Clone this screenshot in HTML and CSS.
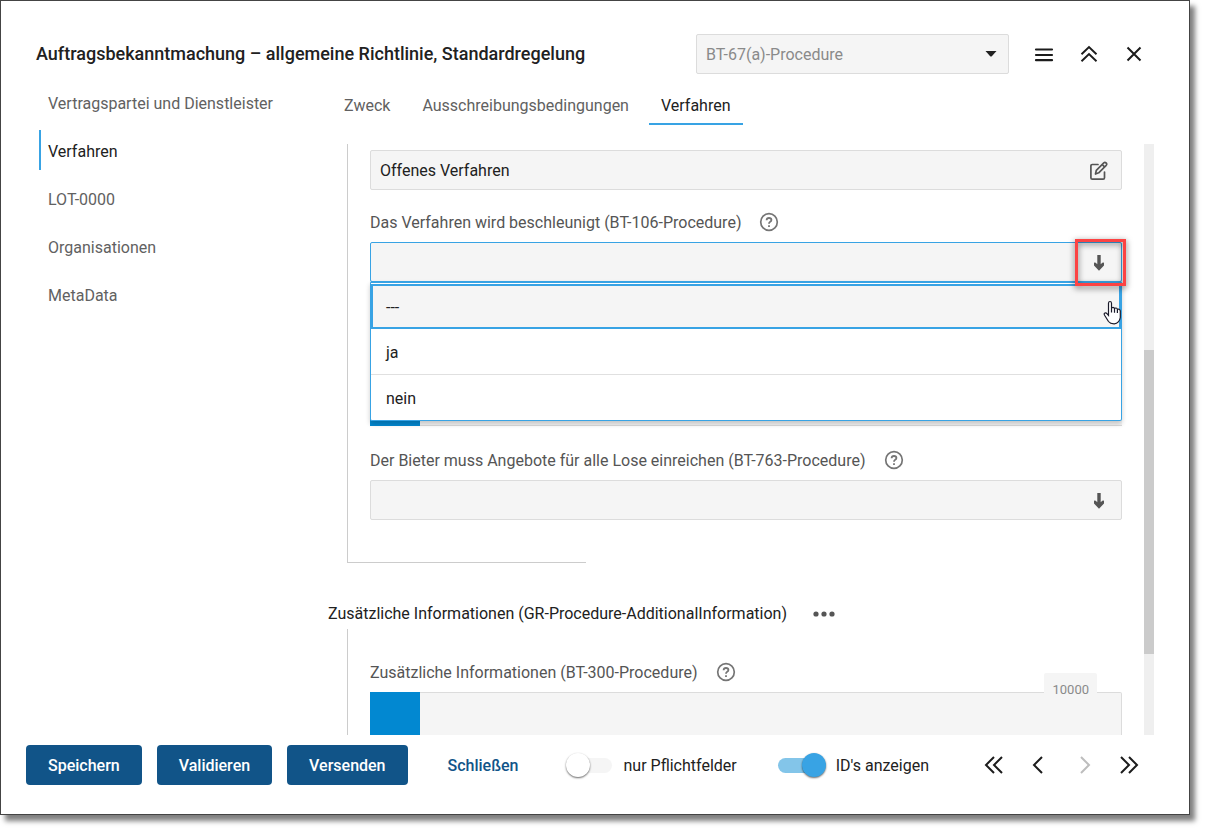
FILE: index.html
```html
<!DOCTYPE html>
<html lang="de">
<head>
<meta charset="utf-8">
<title>Auftragsbekanntmachung</title>
<link rel="stylesheet" href="styles.css">
</head>
<body>
<div class="dialog">
  <header class="header">
    <h1 class="title">Auftragsbekanntmachung – allgemeine Richtlinie, Standardregelung</h1>
    <div class="jump">
      <select class="jump-select" aria-label="Feld">
        <option>BT-67(a)-Procedure</option>
      </select>
      <svg class="jump-caret" width="12" height="6" viewBox="0 0 12 6"><path d="M0.500 0h11L6.800 5.200q-.8.8-1.600 0z" fill="#212121"/></svg>
    </div>
    <div class="header-actions">
      <button class="icon-button" aria-label="Menü"><svg width="20" height="20" viewBox="0 0 20 20" fill="none" stroke="#1c1c1c" stroke-width="2.200" stroke-linecap="round"><path d="M2 5.500h16M2 11h16M2 16.200h16"/></svg></button>
      <button class="icon-button" aria-label="Einklappen"><svg width="20" height="20" viewBox="0 0 20 20" fill="none" stroke="#1c1c1c" stroke-width="1.900"><path d="M2.500 10.200L10 3l7.500 7.200M2.500 17.200L10 10l7.500 7.200"/></svg></button>
      <button class="icon-button" aria-label="Schließen"><svg width="20" height="20" viewBox="0 0 20 20" fill="none" stroke="#1c1c1c" stroke-width="2"><path d="M3.500 3.500l13 13M16.500 3.500l-13 13"/></svg></button>
    </div>
  </header>

  <div class="main">
    <nav class="sidebar">
      <a class="side-item" href="#">Vertragspartei und Dienstleister</a>
      <a class="side-item active" href="#">Verfahren</a>
      <a class="side-item" href="#">LOT-0000</a>
      <a class="side-item" href="#">Organisationen</a>
      <a class="side-item" href="#">MetaData</a>
    </nav>

    <section class="content">
      <nav class="tabs">
        <a class="tab" href="#">Zweck</a>
        <a class="tab" href="#">Ausschreibungsbedingungen</a>
        <a class="tab active" href="#">Verfahren</a>
      </nav>

      <div class="scroller">
        <div class="form">
          <div class="group group-closed">
            <div class="control">
              <input class="input" type="text" value="Offenes Verfahren" aria-label="Verfahrensart" readonly>
              <button class="control-button" aria-label="Bearbeiten"><svg width="20" height="20" viewBox="0 0 20 20" fill="none" stroke="#555" stroke-width="1.700" stroke-linecap="round" stroke-linejoin="round"><path d="M9 3.500H3.300Q1.900 3.500 1.900 4.900v11.900q0 1.400 1.400 1.400h10.800q1.400 0 1.400-1.400v-5.700"/><path d="M6.500 13l.8-3.600 7.500-7.500q1.100-.9 2.300.1t.1 2.300l-7.500 7.500zM13.300 3.600l2.200 2.200"/></svg></button>
            </div>

            <div class="label-row">
              <label for="bt106">Das Verfahren wird beschleunigt (BT-106-Procedure)</label>
              <button class="help" aria-label="Hilfe"><svg width="20" height="20" viewBox="0 0 20 20" fill="none" stroke="#757575" stroke-width="1.700"><circle cx="10" cy="10" r="8.300"/><path d="M7.600 8.200Q7.700 6 10 6t2.400 1.900q0 1.100-1.200 1.800T10 11.700M10 13.200v1.800" stroke-width="1.800"/></svg></button>
            </div>
            <div class="control open">
              <input class="input" id="bt106" type="text">
              <button class="control-button" aria-label="Auswahl öffnen"><svg width="20" height="20" viewBox="0 0 20 20" fill="#555"><path d="M8.300 2h3.400v9.300l1.600-1.500q.9-.8 1.700 0v2.600L10 17.700l-5-5.300V9.800q.8-.8 1.700 0l1.600 1.500z"/></svg></button>
              <div class="marker"></div>
              <div class="menu" role="listbox">
                <button class="option focused" role="option">---</button>
                <button class="option" role="option">ja</button>
                <button class="option" role="option">nein</button>
              </div>
              <svg class="pointer" width="20" height="26" viewBox="0 0 20 26"><path d="M5.500 15.500V3.200Q5.600 1.500 7 1.500t1.500 1.700V8.500Q8.700 7.300 10 7.300t1.500 1.500Q11.800 7.900 13 8t1.400 1.500Q15 8.800 16 9.200t1.300 1.700v6.600q-.4 2.700-2 4.300-1.600 1.900-4 2-4 .1-5.800-2.300L1.600 15.200Q.6 13.500 1.900 13q1.300-.4 2.300 1zM8.500 8.500v4M11.500 9v3.700M14.400 9.700v3.200" fill="#fff" stroke="#1a1a2a" stroke-width="1.200"/></svg>
            </div>

            <div class="covered"><span class="strip"></span></div>

            <div class="label-row">
              <label for="bt763">Der Bieter muss Angebote für alle Lose einreichen (BT-763-Procedure)</label>
              <button class="help" aria-label="Hilfe"><svg width="20" height="20" viewBox="0 0 20 20" fill="none" stroke="#757575" stroke-width="1.700"><circle cx="10" cy="10" r="8.300"/><path d="M7.600 8.200Q7.700 6 10 6t2.400 1.900q0 1.100-1.200 1.800T10 11.700M10 13.200v1.800" stroke-width="1.800"/></svg></button>
            </div>
            <div class="control">
              <input class="input" id="bt763" type="text">
              <button class="control-button" aria-label="Auswahl öffnen"><svg width="20" height="20" viewBox="0 0 20 20" fill="#555"><path d="M8.300 2h3.400v9.300l1.600-1.500q.9-.8 1.700 0v2.600L10 17.700l-5-5.300V9.800q.8-.8 1.700 0l1.600 1.500z"/></svg></button>
            </div>
          </div>

          <div class="group-heading">
            <h2>Zusätzliche Informationen (GR-Procedure-AdditionalInformation)</h2>
            <button class="more" aria-label="Mehr"><svg width="22" height="8" viewBox="0 0 22 8" fill="#555"><circle cx="3" cy="4" r="2.600"/><circle cx="11" cy="4" r="2.600"/><circle cx="19" cy="4" r="2.600"/></svg></button>
          </div>

          <div class="group group-extra">
            <div class="label-row">
              <label for="bt300">Zusätzliche Informationen (BT-300-Procedure)</label>
              <button class="help" aria-label="Hilfe"><svg width="20" height="20" viewBox="0 0 20 20" fill="none" stroke="#757575" stroke-width="1.700"><circle cx="10" cy="10" r="8.300"/><path d="M7.600 8.200Q7.700 6 10 6t2.400 1.900q0 1.100-1.200 1.800T10 11.700M10 13.200v1.800" stroke-width="1.800"/></svg></button>
            </div>
            <div class="area">
              <span class="strip"></span>
              <textarea class="textarea" id="bt300"></textarea>
              <span class="counter">10000</span>
            </div>
          </div>
        </div>
        <div class="track"><div class="thumb"></div></div>
      </div>
    </section>
  </div>

  <footer class="footer">
    <div class="buttons">
      <button class="primary">Speichern</button>
      <button class="primary">Validieren</button>
      <button class="primary">Versenden</button>
    </div>
    <button class="link-button">Schließen</button>
    <label class="toggle"><input class="switch" type="checkbox"><span class="toggle-text">nur Pflichtfelder</span></label>
    <label class="toggle toggle-ids"><input class="switch" type="checkbox" checked><span class="toggle-text">ID's anzeigen</span></label>
    <div class="pager">
      <button class="icon-button" aria-label="Erste"><svg width="20" height="20" viewBox="0 0 20 20" fill="none" stroke="#1c1c1c" stroke-width="2"><path d="M10 2l-8 8 8 8M18 2l-8 8 8 8"/></svg></button>
      <button class="icon-button" aria-label="Zurück"><svg width="20" height="20" viewBox="0 0 20 20" fill="none" stroke="#1c1c1c" stroke-width="2"><path d="M13 2l-8 8 8 8"/></svg></button>
      <button class="icon-button" aria-label="Weiter" disabled><svg width="20" height="20" viewBox="0 0 20 20" fill="none" stroke="#bdbdbd" stroke-width="2"><path d="M7 2l8 8-8 8"/></svg></button>
      <button class="icon-button" aria-label="Letzte"><svg width="20" height="20" viewBox="0 0 20 20" fill="none" stroke="#1c1c1c" stroke-width="2"><path d="M2 2l8 8-8 8M10 2l8 8-8 8"/></svg></button>
    </div>
  </footer>
</div>
</body>
</html>
```
FILE: styles.css
```css
* {
  box-sizing: border-box;
}

body {
  margin: 0;
  height: 100vh;
  padding: 0 15px 15px 0;
  overflow: hidden;
  background: #fff;
  color: #212121;
  font: 16px/20px Roboto, "Liberation Sans", sans-serif;
}

button,
input,
select,
textarea {
  margin: 0;
  padding: 0;
  border: 0;
  background: none;
  color: inherit;
  font: inherit;
}

svg {
  display: block;
}

a {
  color: inherit;
  text-decoration: none;
}

.dialog {
  display: flex;
  flex-direction: column;
  height: 100%;
  border: 1px solid #444;
  background: #fff;
  box-shadow: 5px 6px 5px rgba(0, 0, 0, 0.5);
}

/* Header */

.header {
  display: flex;
  align-items: center;
  padding: 33px 43px 0 35px;
}

.title {
  flex: 1;
  margin: 0;
  font-size: 18px;
  font-weight: 500;
  line-height: 24px;
}

.jump {
  position: relative;
  width: 313px;
}

.jump-select {
  display: block;
  width: 100%;
  height: 40px;
  padding: 2px 9px 0;
  border: 1px solid #dcdcdc;
  border-radius: 2px;
  background: #f5f5f5;
  color: #8a8a8a;
  appearance: none;
}

.jump-caret {
  position: absolute;
  top: 17px;
  right: 12px;
  pointer-events: none;
}

.header-actions {
  display: flex;
  gap: 21px;
  margin-left: 23px;
}

.icon-button {
  width: 24px;
  height: 24px;
  padding: 2px;
}

/* Columns */

.main {
  display: flex;
  flex: 1;
  min-height: 0;
}

.sidebar {
  display: flex;
  flex-direction: column;
  gap: 8px;
  width: 289px;
  padding: 8px 0 0 38px;
  color: #616161;
}

.side-item {
  padding: 12px 0 8px 7px;
  border-left: 2px solid transparent;
}

.side-item.active {
  border-color: #38a3e4;
  color: #212121;
}

.content {
  display: flex;
  flex: 1;
  flex-direction: column;
  min-width: 0;
  padding-right: 35px;
}

.tabs {
  display: flex;
  gap: 8px;
  padding: 11px 0 0 42px;
  color: #616161;
}

.tab {
  padding: 11px 12px 7px;
  border-bottom: 2px solid transparent;
}

.tab.active {
  border-color: #38a3e4;
  color: #212121;
}

.scroller {
  display: flex;
  flex: 1;
  gap: 22px;
  min-height: 0;
  margin-top: 19px;
  padding-left: 38px;
  overflow: hidden;
}

.form {
  flex: 1;
  min-width: 0;
}

.track {
  width: 10px;
  padding-top: 206px;
  background: #efefef;
}

.thumb {
  height: 304px;
  background: #cbcbcb;
}

/* Form */

.group {
  margin-left: 19px;
  padding-left: 22px;
  border-left: 1px solid #ccc;
}

.group-closed {
  padding-top: 6px;
  padding-bottom: 43px;
  background: linear-gradient(#ccc, #ccc) left bottom / 238px 1px no-repeat;
}

.label-row {
  display: flex;
  align-items: center;
  gap: 18px;
  padding: 21px 0 9px;
  color: #555;
}

.label-row label {
  padding-top: 2px;
}

.help {
  width: 20px;
  height: 20px;
}

.control {
  position: relative;
  display: flex;
  height: 40px;
  border: 1px solid #dcdcdc;
  border-radius: 2px;
  background: #f5f5f5;
}

.control.open {
  z-index: 1;
  border-color: #38a3e4;
}

.input {
  flex: 1;
  min-width: 0;
  padding: 2px 9px 0;
  outline: 0;
}

.control-button {
  width: 44px;
  padding: 2px 12px 0;
}

.menu {
  position: absolute;
  top: 38px;
  right: -1px;
  left: -1px;
  padding-top: 1px;
  border: 1px solid #38a3e4;
  border-top-width: 2px;
  border-radius: 2px;
  background: #fff;
  box-shadow: 0 3px 5px rgba(0, 0, 0, 0.2);
}

.option {
  display: block;
  width: 100%;
  height: 46px;
  padding: 2px 15px 0;
  border-top: 1px solid #e0e0e0;
  text-align: left;
}

.option.focused {
  height: 45px;
  border-top: 0;
  outline: 2px solid #38a3e4;
  outline-offset: -2px;
  background: #f5f5f5;
}

.option.focused + .option {
  height: 45px;
  border-top: 0;
}

.marker {
  position: absolute;
  z-index: 2;
  top: -4px;
  right: -5px;
  width: 51px;
  height: 47px;
  border: 3px solid #fc4343;
  filter: drop-shadow(0 2px 3px rgba(0, 0, 0, 0.6));
  pointer-events: none;
}

.pointer {
  position: absolute;
  z-index: 2;
  top: 57px;
  right: -2px;
}

.covered {
  display: flex;
  height: 92px;
  margin-top: 52px;
  margin-bottom: 2px;
  border-bottom: 1px solid #dcdcdc;
  background: #f5f5f5;
}

.strip {
  width: 50px;
  margin-bottom: -1px;
  background: #0288d1;
}

.group-heading {
  display: flex;
  align-items: center;
  gap: 26px;
  margin-top: 40px;
  padding-bottom: 5px;
}

.group-heading h2 {
  margin: 0;
  padding-top: 1px;
  font-size: 16px;
  font-weight: 400;
  line-height: 20px;
}

.group-extra {
  padding-top: 11px;
}

.area {
  position: relative;
  display: flex;
  height: 92px;
}

.textarea {
  flex: 1;
  border: 1px solid #dcdcdc;
  border-left: 0;
  border-radius: 0 2px 2px 0;
  background: #f5f5f5;
  resize: none;
}

.counter {
  position: absolute;
  top: -19px;
  right: 25px;
  padding: 7px 8px 0;
  border-radius: 2px;
  background: #f5f5f5;
  color: #8a8a8a;
  font-size: 13px;
}

/* Footer */

.footer {
  display: flex;
  align-items: center;
  padding: 10px 48px 29px 25px;
}

.buttons {
  display: flex;
  gap: 15px;
}

.primary {
  height: 40px;
  padding: 2px 22px 0;
  border-radius: 4px;
  background: #115488;
  color: #fff;
  font-weight: 500;
}

.link-button {
  height: 40px;
  margin-left: 20px;
  padding: 2px 20px 0;
  color: #115488;
  font-weight: 500;
}

.toggle {
  display: flex;
  align-items: center;
  gap: 12px;
  margin-left: 27px;
}

.toggle-text {
  padding-top: 2px;
}

.switch {
  position: relative;
  width: 46px;
  height: 24px;
  appearance: none;
}

.switch::before {
  position: absolute;
  inset: 5px 0 4px 6px;
  border-radius: 8px;
  background: #f5f5f5;
  content: "";
}

.switch::after {
  position: absolute;
  top: 0;
  left: 0;
  width: 24px;
  height: 24px;
  border-radius: 50%;
  background: #fff;
  box-shadow: 0 1px 2px rgba(0, 0, 0, 0.6);
  content: "";
}

.switch:checked {
  width: 48px;
}

.switch:checked::before {
  inset: 5px 8px 4px 0;
  background: #83c5e9;
}

.switch:checked::after {
  left: 24px;
  background: #38a3e4;
}

.toggle-ids {
  gap: 10px;
  margin-left: 41px;
}

.pager {
  display: flex;
  gap: 21px;
  margin-left: auto;
}
```
